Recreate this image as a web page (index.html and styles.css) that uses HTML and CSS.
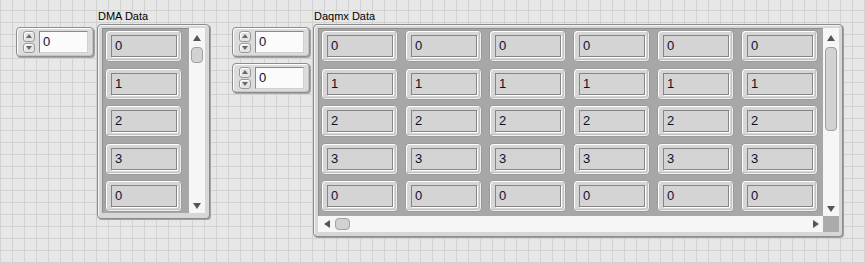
FILE: index.html
```html
<!DOCTYPE html>
<html lang="en">
<head>
    <meta charset="UTF-8">
    <title>Front Panel</title>
    <link rel="stylesheet" href="styles.css">
</head>
<body>
    <div class="panel">
        <div class="numeric first-index">
            <div class="spin"><span class="spin-btn"><i class="tri tri-up"></i></span><span class="spin-btn"><i class="tri tri-down"></i></span></div>
            <div class="num-field">0</div>
        </div>

        <div class="array-group">
            <div class="array-label">DMA Data</div>
            <div class="array-frame dma-frame">
                <div class="array-well dma-well">
                    <div class="cells dma-cells">
                        <div class="cell"><div class="cell-field">0</div></div>
                        <div class="cell"><div class="cell-field">1</div></div>
                        <div class="cell"><div class="cell-field">2</div></div>
                        <div class="cell"><div class="cell-field">3</div></div>
                        <div class="cell"><div class="cell-field">0</div></div>
                    </div>
                    <div class="vscroll">
                        <i class="tri tri-up"></i>
                        <div class="thumb dma-thumb"></div>
                        <i class="tri tri-down"></i>
                    </div>
                </div>
            </div>
        </div>

        <div class="index-stack">
            <div class="numeric">
                <div class="spin"><span class="spin-btn"><i class="tri tri-up"></i></span><span class="spin-btn"><i class="tri tri-down"></i></span></div>
                <div class="num-field">0</div>
            </div>
            <div class="numeric">
                <div class="spin"><span class="spin-btn"><i class="tri tri-up"></i></span><span class="spin-btn"><i class="tri tri-down"></i></span></div>
                <div class="num-field">0</div>
            </div>
        </div>

        <div class="array-group">
            <div class="array-label">Daqmx Data</div>
            <div class="array-frame daq-frame">
                <div class="array-well daq-well">
                    <div class="cells daq-cells" id="daq-cells"></div>
                    <div class="vscroll">
                        <i class="tri tri-up"></i>
                        <div class="thumb daq-vthumb"></div>
                        <i class="tri tri-down"></i>
                    </div>
                    <div class="hscroll">
                        <i class="tri tri-left"></i>
                        <div class="thumb daq-hthumb"></div>
                        <span class="hscroll-fill"></span>
                        <i class="tri tri-right"></i>
                    </div>
                    <div class="corner"></div>
                </div>
            </div>
        </div>
    </div>

    <script>
        // rows of the 2D array, 6 columns each
        const rows = [0, 1, 2, 3, 0];
        const grid = document.getElementById('daq-cells');
        rows.forEach(function (v) {
            for (let c = 0; c < 6; c++) {
                const cell = document.createElement('div');
                cell.className = 'cell';
                cell.innerHTML = '<div class="cell-field">' + v + '</div>';
                grid.appendChild(cell);
            }
        });
    </script>
</body>
</html>
```

FILE: styles.css
```css
body {
    margin: 0;
    background-color: #e7e7e7;
    background-image:
        linear-gradient(to right, #d2d2d2 1px, transparent 1px),
        linear-gradient(to bottom, #d2d2d2 1px, transparent 1px);
    background-size: 12px 12px;
    background-position: 0 10px;
    font-family: "Liberation Sans", Arial, sans-serif;
    color: #111111;
    height: 263px;
    overflow: hidden;
}
.panel {
    display: flex;
    align-items: flex-start;
    padding: 8px 0 0 16px;
}

/* numeric controls with increment buttons */
.numeric {
    box-sizing: border-box;
    width: 78px;
    height: 30px;
    display: flex;
    align-items: flex-start;
    gap: 4px;
    padding: 3px 5px 0 6px;
    background: #dcdcdc;
    border: 1px solid #8e8e8e;
    border-radius: 4px;
    box-shadow: inset 1px 1px 0 #ffffff, inset -1px -1px 0 #c4c4c4, 1px 1px 0 #a5a5a5;
}
.first-index {
    margin-top: 19px;
}
.spin {
    width: 12px;
    height: 22px;
    display: flex;
    flex-direction: column;
    gap: 1px;
}
.spin-btn {
    box-sizing: border-box;
    flex: 1;
    display: flex;
    align-items: center;
    justify-content: center;
    background: #e4e4e4;
    border: 1px solid #9a9a9a;
    border-radius: 3px;
    box-shadow: inset 1px 1px 0 #ffffff;
}
.spin-btn .tri-up {
    border-left-width: 3px;
    border-right-width: 3px;
    border-bottom-width: 4px;
    border-bottom-color: #6a6a6a;
}
.spin-btn .tri-down {
    border-left-width: 3px;
    border-right-width: 3px;
    border-top-width: 4px;
    border-top-color: #6a6a6a;
}
.num-field {
    box-sizing: border-box;
    flex: 1;
    height: 22px;
    background: #fbfbfb;
    border: 1px solid #8a8a8a;
    border-right-color: #d0d0d0;
    border-bottom-color: #d0d0d0;
    font-size: 13px;
    line-height: 20px;
    padding-left: 3px;
    color: #101030;
}
.index-stack {
    display: flex;
    flex-direction: column;
    gap: 6px;
    margin: 19px 0 0 22px;
}

/* array containers */
.array-group {
    margin-left: 3px;
    display: flex;
    flex-direction: column;
}
.array-label {
    font-size: 11px;
    line-height: 16px;
    padding-left: 1px;
    color: #000000;
}
.array-frame {
    box-sizing: border-box;
    background: #d7d7d7;
    border: 1px solid #8c8c8c;
    border-radius: 4px;
    box-shadow: inset 1px 1px 0 #f4f4f4, 1px 1px 0 #a0a0a0;
}
.dma-frame {
    width: 113px;
    height: 195px;
    padding: 3px 4px 5px 4px;
}
.daq-frame {
    width: 530px;
    height: 213px;
    padding: 3px 3px 4px 4px;
}
.array-well {
    height: 100%;
    background: #a7a7a7;
    box-shadow: inset 1px 1px 0 #8e8e8e;
    display: grid;
}
.dma-well {
    grid-template-columns: 1fr 16px;
}
.daq-well {
    grid-template-columns: 1fr 16px;
    grid-template-rows: 1fr 16px;
}
.cells {
    padding: 2px 0 0 3px;
}
.dma-cells {
    display: flex;
    flex-direction: column;
    row-gap: 5.5px;
}
.daq-cells {
    display: grid;
    grid-template-columns: repeat(6, 77px);
    grid-auto-rows: 32px;
    column-gap: 7px;
    row-gap: 5.5px;
    align-content: start;
}
.cell {
    box-sizing: border-box;
    width: 77px;
    height: 32px;
    padding: 4px 4px 0 5px;
    background: #d6d6d6;
    border: 1px solid #9b9b9b;
    border-radius: 4px;
    box-shadow: inset 1px 1px 0 #ffffff, inset -1px -1px 0 #f0f0f0, inset -2px -2px 0 #c2c2c2;
}
.cell-field {
    box-sizing: border-box;
    height: 22px;
    background: #d4d4d4;
    border: 1px solid #858585;
    box-shadow: 1px 1px 0 #ffffff;
    font-size: 13px;
    line-height: 20px;
    padding-left: 3px;
    color: #101030;
}

/* scrollbars */
.vscroll {
    background: #f6f6f6;
    display: flex;
    flex-direction: column;
    align-items: center;
    padding: 7px 0 4px 0;
    box-sizing: border-box;
}
.vscroll .tri-down {
    margin-top: auto;
}
.hscroll {
    background: #f6f6f6;
    display: flex;
    align-items: center;
    padding: 0 4px 0 6px;
}
.hscroll-fill {
    flex: 1;
}
.corner {
    background: #ababab;
}
.thumb {
    box-sizing: border-box;
    background: #d2d2d2;
    border: 1px solid #a0a0a0;
    border-radius: 4px;
}
.dma-thumb {
    width: 12px;
    height: 16px;
    margin-top: 6px;
}
.daq-vthumb {
    width: 12px;
    height: 84px;
    margin-top: 6px;
}
.daq-hthumb {
    width: 15px;
    height: 12px;
    margin-left: 5px;
}

/* triangles */
.tri {
    display: block;
    width: 0;
    height: 0;
    border-style: solid;
    border-color: transparent;
    border-width: 0;
}
.tri-up {
    border-left-width: 4px;
    border-right-width: 4px;
    border-bottom: 6px solid #555555;
}
.tri-down {
    border-left-width: 4px;
    border-right-width: 4px;
    border-top: 6px solid #555555;
}
.tri-left {
    border-top-width: 4px;
    border-bottom-width: 4px;
    border-right: 6px solid #555555;
}
.tri-right {
    border-top-width: 4px;
    border-bottom-width: 4px;
    border-left: 6px solid #555555;
}
```
